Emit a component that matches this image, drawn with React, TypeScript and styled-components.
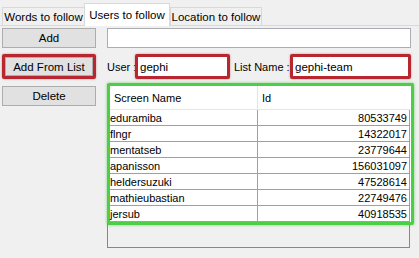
import React from "react";
import styled, { createGlobalStyle } from "styled-components";

const Global = createGlobalStyle`
  html, body { margin: 0; padding: 0; background: #f0f0f0; }
  * { box-sizing: border-box; }
`;

const Window = styled.div`
  width: 419px;
  height: 258px;
  background: #f0f0f0;
  font-family: "Liberation Sans", Arial, sans-serif;
  font-size: 11px;
  color: #000;
  overflow: hidden;
`;

const TabBar = styled.div`
  display: flex;
  align-items: flex-end;
  height: 26px;
  padding-left: 2px;
  border-bottom: 1px solid #d9d9d9;
`;

const Tab = styled.div<{ $active?: boolean; $w: number }>`
  width: ${(p) => p.$w}px;
  height: ${(p) => (p.$active ? 23 : 18)}px;
  margin-bottom: ${(p) => (p.$active ? -1 : 0)}px;
  margin-left: ${(p) => (p.$active ? -1 : 0)}px;
  background: ${(p) => (p.$active ? "#ffffff" : "#f0f0f0")};
  border: 1px solid #d9d9d9;
  border-bottom: none;
  display: flex;
  align-items: center;
  justify-content: center;
  font-size: 11.5px;
  white-space: nowrap;
  padding-top: ${(p) => (p.$active ? 0 : 1)}px;
`;

const Body = styled.div`
  display: flex;
  padding: 2px 0 0 2px;
`;

const LeftColumn = styled.div`
  width: 94px;
  display: flex;
  flex-direction: column;
`;

const Button = styled.div`
  height: 20px;
  background: #e1e1e1;
  border: 1px solid #adadad;
  display: flex;
  align-items: center;
  justify-content: center;
  font-size: 11.5px;
`;

const RedMark = styled.div<{ $mt?: number }>`
  margin-top: ${(p) => p.$mt ?? 0}px;
  border: 3px solid #b8262f;
  border-radius: 2px;
  box-shadow: 0 0 2px rgba(150, 20, 20, 0.5);
  display: flex;
`;

const MarkedButton = styled(Button)`
  flex: 1;
  height: 19px;
`;

const Spaced = styled.div<{ $mt: number }>`
  margin-top: ${(p) => p.$mt}px;
`;

const RightColumn = styled.div`
  margin-left: 11px;
  width: 304px;
  display: flex;
  flex-direction: column;
`;

const TextBox = styled.div`
  height: 20px;
  background: #ffffff;
  border: 1px solid #abadb3;
`;

const FieldRow = styled.div`
  margin-top: 6px;
  height: 25px;
  display: flex;
  align-items: center;
`;

const Label = styled.span<{ $w: number; $ml?: number }>`
  flex: 0 0 ${(p) => p.$w}px;
  min-width: 0;
  margin-left: ${(p) => p.$ml ?? 0}px;
  font-size: 11px;
  white-space: nowrap;
`;

const FieldMark = styled(RedMark)<{ $w: number }>`
  flex: 0 0 ${(p) => p.$w}px;
  height: 25px;
`;

const FieldInput = styled.div`
  flex: 1;
  background: #ffffff;
  display: flex;
  align-items: center;
  padding: 0 2px;
  font-size: 11.5px;
`;

const TableFrame = styled.div`
  margin-top: 5px;
  height: 164px;
  width: 303px;
  border: 1px solid #828790;
  background: #f0f0f0;
`;

const GreenMark = styled.div`
  margin: -2px -5px 0 -1px;
  border: 3px solid #4ccf47;
  border-radius: 2px;
  box-shadow: 0 0 3px rgba(40, 180, 40, 0.6);
  background: #ffffff;
`;

const Grid = styled.div`
  display: grid;
  grid-template-columns: 148px 152px;
`;

const HeadCell = styled.div<{ $last?: boolean }>`
  height: 24px;
  display: flex;
  align-items: center;
  padding-left: 4px;
  font-size: 11px;
  background: #ffffff;
  border-bottom: 1px solid #e5e5e5;
  border-right: ${(p) => (p.$last ? "none" : "1px solid #e5e5e5")};
`;

const Cell = styled.div<{ $num?: boolean }>`
  height: 16px;
  display: flex;
  align-items: center;
  justify-content: ${(p) => (p.$num ? "flex-end" : "flex-start")};
  padding-right: ${(p) => (p.$num ? 2 : 0)}px;
  font-size: 11px;
  border-bottom: 1px solid #a0a0a0;
  border-right: 1px solid #a0a0a0;
  white-space: nowrap;
`;

const users: [string, string][] = [
  ["eduramiba", "80533749"],
  ["flngr", "14322017"],
  ["mentatseb", "23779644"],
  ["apanisson", "156031097"],
  ["heldersuzuki", "47528614"],
  ["mathieubastian", "22749476"],
  ["jersub", "40918535"],
];

export default function App() {
  return (
    <>
      <Global />
      <Window>
        <TabBar>
          <Tab $w={83}>Words to follow</Tab>
          <Tab $w={86} $active>Users to follow</Tab>
          <Tab $w={92}>Location to follow</Tab>
        </TabBar>
        <Body>
          <LeftColumn>
            <Button>Add</Button>
            <RedMark $mt={6}>
              <MarkedButton>Add From List</MarkedButton>
            </RedMark>
            <Spaced $mt={7}>
              <Button>Delete</Button>
            </Spaced>
          </LeftColumn>
          <RightColumn>
            <TextBox />
            <FieldRow>
              <Label $w={28}>User :</Label>
              <FieldMark $w={95}>
                <FieldInput>gephi</FieldInput>
              </FieldMark>
              <Label $w={56} $ml={4}>List Name :</Label>
              <FieldMark $w={121}>
                <FieldInput>gephi-team</FieldInput>
              </FieldMark>
            </FieldRow>
            <TableFrame>
              <GreenMark>
                <Grid>
                  <HeadCell>Screen Name</HeadCell>
                  <HeadCell $last>Id</HeadCell>
                  {users.map(([name, id]) => (
                    <React.Fragment key={name}>
                      <Cell>{name}</Cell>
                      <Cell $num>{id}</Cell>
                    </React.Fragment>
                  ))}
                </Grid>
              </GreenMark>
            </TableFrame>
          </RightColumn>
        </Body>
      </Window>
    </>
  );
}
